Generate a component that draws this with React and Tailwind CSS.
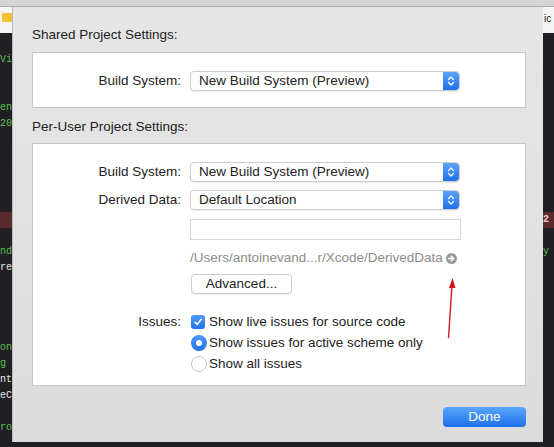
import React from "react";

const codeLeft = [
  { i: 0, t: "Vi", c: "text-[#5fbf4f]" },
  { i: 3, t: "en", c: "text-[#5fbf4f]" },
  { i: 4, t: "20", c: "text-[#5fbf4f]" },
  { i: 12, t: "nd", c: "text-[#5fbf4f]" },
  { i: 13, t: "re", c: "text-[#e6e6e6]" },
  { i: 18, t: "on", c: "text-[#5fbf4f]" },
  { i: 19, t: "g", c: "text-[#5fbf4f]" },
  { i: 20, t: "nt", c: "text-[#e6e6e6]" },
  { i: 21, t: "eC", c: "text-[#e6e6e6]" },
  { i: 23, t: "ro", c: "text-[#5fbf4f]" },
];

function CodeStrip({ lines, band }) {
  const rows = Array.from({ length: 25 }, (_, i) => {
    const hit = lines.find((l) => l.i === i);
    return (
      <div
        key={i}
        className={`h-[16px] leading-[16px] whitespace-nowrap ${i === 10 ? "bg-[#5b2a2c]" : ""}`}
      >
        {i === 10 && band ? (
          <span className="text-[#e8c9c9] font-bold">{band}</span>
        ) : hit ? (
          <span className={hit.c}>{hit.t}</span>
        ) : (
          "\u00a0"
        )}
      </div>
    );
  });
  return (
    <div className="bg-[#1f1f24] flex-1 pt-[19px] overflow-hidden font-['Liberation_Mono',monospace] text-[10px]">
      {rows}
    </div>
  );
}

function Stepper() {
  return (
    <div className="w-[16px] h-full rounded-r-[4px] bg-gradient-to-b from-[#5ba3fa] to-[#1c6fe9] flex items-center justify-center">
      <svg width="8" height="12" viewBox="0 0 8 12">
        <path d="M1.5 4.5 L4 2 L6.5 4.5" fill="none" stroke="white" strokeWidth="1.3" strokeLinecap="round" strokeLinejoin="round" />
        <path d="M1.5 7.5 L4 10 L6.5 7.5" fill="none" stroke="white" strokeWidth="1.3" strokeLinecap="round" strokeLinejoin="round" />
      </svg>
    </div>
  );
}

function Popup({ value }) {
  return (
    <div className="w-[270px] h-[20px] bg-white rounded-[4px] border border-[#cdcdcd] shadow-[0_1px_1px_rgba(0,0,0,0.08)] flex items-center">
      <div className="flex-1 pl-[8px] leading-[16px] text-[#222]">{value}</div>
      <Stepper />
    </div>
  );
}

function Row({ label, children, className = "" }) {
  return (
    <div className={`flex items-center gap-[9px] ${className}`}>
      <div className="w-[148px] text-right leading-[16px] text-[#222]">{label}</div>
      {children}
    </div>
  );
}

export default function App() {
  return (
    <div className="w-[554px] h-[447px] overflow-hidden bg-[#1f1f24] font-['Liberation_Sans',Arial,sans-serif] text-[13.5px] flex flex-col relative">
      <div className="h-[7px] bg-[#d4d4d4] border-b border-[#ababab] shrink-0" />
      <div className="flex flex-1 min-h-0">
        {/* left editor strip */}
        <div className="w-[12px] flex flex-col shrink-0">
          <div className="h-[26px] bg-[#f4f4f4] pt-[6px] pl-[2px]">
            <div className="w-[10px] h-[9px] bg-[#f2c230] rounded-[1px]" />
          </div>
          <CodeStrip lines={codeLeft} />
        </div>

        {/* dialog */}
        <div className="flex-1 flex flex-col">
          <div className="h-[435px] bg-gradient-to-b from-[#e6e6e6] to-[#dcdcdc] border-l border-[#bdbdbd] pl-[19px] pr-[17px] pt-[20px]">
            <div className="leading-[16px] text-[#222]">Shared Project Settings:</div>
            <div className="mt-[9px] h-[56px] bg-white border border-[#c6c6c6] pt-[18px]">
              <Row label="Build System:">
                <Popup value="New Build System (Preview)" />
              </Row>
            </div>

            <div className="mt-[11px] leading-[16px] text-[#222]">Per-User Project Settings:</div>
            <div className="mt-[8px] h-[243px] bg-white border border-[#c6c6c6] pt-[18px]">
              <Row label="Build System:">
                <Popup value="New Build System (Preview)" />
              </Row>
              <Row label="Derived Data:" className="mt-[8px]">
                <Popup value="Default Location" />
              </Row>
              <Row label="" className="mt-[9px]">
                <div className="w-[271px] h-[21px] bg-white border border-[#d6d6d6]" />
              </Row>
              <Row label="" className="mt-[10px]">
                <div className="flex items-center gap-[3px] leading-[16px] text-[#8c8c8c]">
                  <span>/Users/antoinevand...r/Xcode/DerivedData</span>
                  <svg width="11" height="11" viewBox="0 0 11 11">
                    <circle cx="5.5" cy="5.5" r="5.5" fill="#9b9b9b" />
                    <path d="M2.5 5.5 H7.5 M5.3 3.2 L7.7 5.5 L5.3 7.8" fill="none" stroke="white" strokeWidth="1.5" strokeLinecap="round" strokeLinejoin="round" />
                  </svg>
                </div>
              </Row>
              <Row label="" className="mt-[8px]">
                <div className="ml-[1px] w-[101px] h-[20px] bg-white rounded-[4px] border border-[#cdcdcd] shadow-[0_1px_1px_rgba(0,0,0,0.08)] flex items-center justify-center leading-[16px] text-[#222]">
                  Advanced...
                </div>
              </Row>
              <Row label="Issues:" className="mt-[20px]">
                <div className="flex items-center gap-[4px] ml-[1px]">
                  <div className="w-[14px] h-[14px] rounded-[3px] bg-gradient-to-b from-[#4e9cfa] to-[#1f72ea] flex items-center justify-center">
                    <svg width="10" height="10" viewBox="0 0 10 10">
                      <path d="M2 5.3 L4.1 7.4 L8.2 2.3" fill="none" stroke="white" strokeWidth="1.6" strokeLinecap="round" strokeLinejoin="round" />
                    </svg>
                  </div>
                  <span className="leading-[16px] text-[#222]">Show live issues for source code</span>
                </div>
              </Row>
              <Row label="" className="mt-[5px]">
                <div className="flex items-center gap-[2px] ml-[1px]">
                  <div className="w-[16px] h-[16px] rounded-full bg-gradient-to-b from-[#4e9cfa] to-[#1f72ea] flex items-center justify-center">
                    <div className="w-[6px] h-[6px] rounded-full bg-white" />
                  </div>
                  <span className="leading-[16px] text-[#222]">Show issues for active scheme only</span>
                </div>
              </Row>
              <Row label="" className="mt-[5px]">
                <div className="flex items-center gap-[2px] ml-[1px]">
                  <div className="w-[16px] h-[16px] rounded-full bg-white border border-[#c4c4c4]" />
                  <span className="leading-[16px] text-[#222]">Show all issues</span>
                </div>
              </Row>
            </div>

            <div className="mt-[21px] flex justify-end">
              <div className="w-[83px] h-[20px] rounded-[4px] bg-gradient-to-b from-[#5ba6fb] to-[#1a70ec] flex items-center justify-center leading-[16px] text-white">
                Done
              </div>
            </div>
          </div>
        </div>

        {/* right editor strip */}
        <div className="w-[11px] flex flex-col shrink-0">
          <div className="h-[26px] bg-[#f4f4f4] pt-[6px] pl-[1px] text-[10px] leading-[12px] text-[#222] whitespace-nowrap">ic</div>
          <CodeStrip lines={[{ i: 12, t: "y", c: "text-[#5fbf4f]" }]} band="2" />
        </div>
      </div>

      {/* red annotation arrow */}
      <svg className="absolute left-0 top-0 pointer-events-none" width="554" height="447">
        <path d="M448.5 338 L452 285" stroke="#d0161e" strokeWidth="1.4" fill="none" />
        <path d="M452.5 278 L449 288 L455.5 288 Z" fill="#d0161e" />
      </svg>
    </div>
  );
}
